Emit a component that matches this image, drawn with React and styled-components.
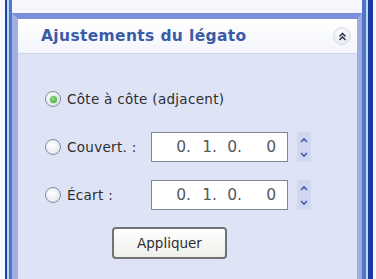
import React, { useState } from 'react';
import styled, { createGlobalStyle } from 'styled-components';

const GlobalStyle = createGlobalStyle`
  html, body {
    margin: 0;
    padding: 0;
    background: #f5f7fc;
  }
  body {
    font-family: "DejaVu Sans", Verdana, sans-serif;
  }
`;

const Frame = styled.div`
  width: 376px;
  height: 279px;
  box-sizing: border-box;
  padding: 0 3px 0 5px;
  display: flex;
  overflow: hidden;
`;

const Rail = styled.div`
  flex: 1;
  display: flex;
  flex-direction: column;
  padding: 13px 6px 0 5px;
  border-left: 2px solid #1d41ab;
  border-right: 5px solid #183a9c;
  box-shadow: inset 2px 0 #b6dcf2, inset 5px 0 #5575cc, inset -2px 0 #b6dcf2, inset -6px 0 #5474cc;
`;

const Panel = styled.div`
  flex: 1;
  display: flex;
  flex-direction: column;
  border-top: 6px solid #7a8fd9;
  border-left: 6px solid #a3afdf;
  border-right: 5px solid #a0acdd;
  background: #dfe3f6;
`;

const Header = styled.div`
  height: 34px;
  display: flex;
  align-items: center;
  justify-content: space-between;
  padding: 0 6px 0 23px;
  background: linear-gradient(#ffffff, #f3f5fc);
  border-bottom: 1px solid #cdd3ec;
`;

const Title = styled.h2`
  margin: 0;
  font-size: 15.5px;
  font-weight: bold;
  color: #3c5ba6;
  letter-spacing: 0.35px;
`;

const Collapse = styled.button`
  width: 18px;
  height: 18px;
  padding: 0;
  border: 1px solid #d9dce8;
  border-radius: 50%;
  background: radial-gradient(circle at 40% 35%, #ffffff, #e1e4ee);
  display: flex;
  align-items: center;
  justify-content: center;
  cursor: pointer;
`;

const Body = styled.div`
  display: grid;
  grid-template-columns: 106px 137px auto;
  grid-auto-rows: 30px;
  row-gap: 18px;
  padding: 30px 0 0 27px;
  align-items: center;
`;

const Option = styled.label`
  display: flex;
  align-items: center;
  grid-column: ${(p) => (p.$wide ? '1 / 4' : 'auto')};
  font-size: 13.5px;
  color: #2e2e2e;
  letter-spacing: 0.3px;
  cursor: pointer;
`;

const Radio = styled.span`
  width: 14px;
  height: 14px;
  margin-right: 6px;
  border: 1px solid #7f8a9c;
  border-radius: 50%;
  background: radial-gradient(circle at 40% 35%, #ffffff, #dfe2ea);
  display: flex;
  align-items: center;
  justify-content: center;
  flex-shrink: 0;

  &::after {
    content: '';
    width: 7px;
    height: 7px;
    border-radius: 50%;
    background: ${(p) => (p.$checked ? 'radial-gradient(circle at 45% 40%, #9be08f, #2f9a2a)' : 'transparent')};
    box-shadow: ${(p) => (p.$checked ? '0 0 2px #7fd070' : 'none')};
  }
`;

const Field = styled.div`
  height: 30px;
  box-sizing: border-box;
  border: 1px solid #7c8a97;
  background: #ffffff;
  display: flex;
  align-items: center;
  justify-content: flex-end;
  padding-right: 11px;
  font-size: 15.5px;
  color: #555a5f;
`;

const Seg = styled.span`
  width: ${(p) => p.$w}px;
  text-align: right;
`;

const Spinner = styled.div`
  width: 14px;
  height: 30px;
  margin-left: 9px;
  background: #d1d7f0;
  display: flex;
  flex-direction: column;
  align-items: center;
  justify-content: space-around;
`;

const ButtonRow = styled.div`
  grid-column: 1 / 4;
  display: flex;
  padding-left: 67px;
  margin-top: -1px;
`;

const Apply = styled.button`
  width: 115px;
  height: 32px;
  border: 2px solid #6f7276;
  border-radius: 4px;
  background: linear-gradient(#ffffff, #eeeeea);
  font-family: "DejaVu Sans", Verdana, sans-serif;
  font-size: 13.5px;
  color: #2e2e2e;
  cursor: pointer;
`;

const Chevron = ({ up }) => (
  <svg width="8" height="6" viewBox="0 0 8 6">
    <path d={up ? 'M1 5 L4 2 L7 5' : 'M1 1 L4 4 L7 1'} fill="none" stroke="#3d5ea8" strokeWidth="1.6" />
  </svg>
);

const Stepper = () => (
  <Spinner>
    <Chevron up />
    <Chevron />
  </Spinner>
);

const Value = () => (
  <Field>
    <Seg $w={26}>0.</Seg>
    <Seg $w={26}>1.</Seg>
    <Seg $w={25}>0.</Seg>
    <Seg $w={34}>0</Seg>
  </Field>
);

export default function App() {
  const [mode, setMode] = useState('adjacent');

  return (
    <>
      <GlobalStyle />
      <Frame>
        <Rail>
          <Panel>
            <Header>
              <Title>Ajustements du légato</Title>
              <Collapse>
                <svg width="9" height="9" viewBox="0 0 9 9">
                  <path d="M1.5 4.5 L4.5 1.5 L7.5 4.5 M1.5 8 L4.5 5 L7.5 8" fill="none" stroke="#2f3b55" strokeWidth="1.6" />
                </svg>
              </Collapse>
            </Header>
            <Body>
              <Option $wide onClick={() => setMode('adjacent')}>
                <Radio $checked={mode === 'adjacent'} />
                Côte à côte (adjacent)
              </Option>
              <Option onClick={() => setMode('couvert')}>
                <Radio $checked={mode === 'couvert'} />
                Couvert. :
              </Option>
              <Value />
              <Stepper />
              <Option onClick={() => setMode('ecart')}>
                <Radio $checked={mode === 'ecart'} />
                Écart :
              </Option>
              <Value />
              <Stepper />
              <ButtonRow>
                <Apply>Appliquer</Apply>
              </ButtonRow>
            </Body>
          </Panel>
        </Rail>
      </Frame>
    </>
  );
}
